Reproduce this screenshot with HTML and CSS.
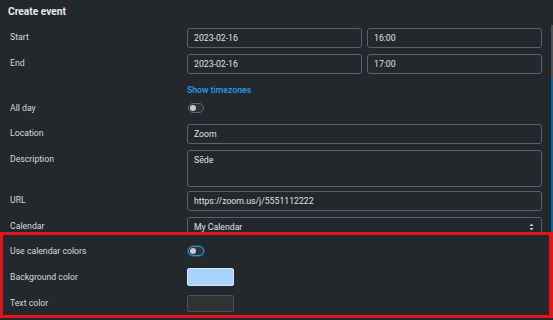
FILE: index.html
```html
<!DOCTYPE html>
<html lang="en">
<head>
  <meta charset="UTF-8" />
  <meta name="viewport" content="width=device-width, initial-scale=1.0"/>
  <title>Create event</title>
  <link rel="stylesheet" href="styles.css">
</head>
<body>
  <div class="top">
    <form class="event-form">
      <h1 class="title">Create event</h1>

      <div class="row">
        <label class="label">Start</label>
        <div class="pair">
          <input class="field" type="text" value="2023-02-16">
          <input class="field" type="text" value="16:00">
        </div>
      </div>

      <div class="row">
        <label class="label">End</label>
        <div class="pair">
          <input class="field" type="text" value="2023-02-16">
          <input class="field" type="text" value="17:00">
        </div>
      </div>

      <div class="row row-link">
        <span class="label"></span>
        <a class="link" href="#">Show timezones</a>
      </div>

      <div class="row row-switch">
        <label class="label">All day</label>
        <span class="switch"></span>
      </div>

      <div class="row">
        <label class="label">Location</label>
        <input class="field" type="text" value="Zoom">
      </div>

      <div class="row row-tall">
        <label class="label">Description</label>
        <textarea class="field area">Sēde</textarea>
      </div>

      <div class="row">
        <label class="label">URL</label>
        <input class="field" type="text" value="https://zoom.us/j/5551112222">
      </div>

      <div class="row">
        <label class="label">Calendar</label>
        <div class="field select">
          <span>My Calendar</span>
          <svg class="caret" width="5" height="8" viewBox="0 0 5 8">
            <path d="M2.5 0.5 L4.5 3 H0.5 Z M2.5 7.5 L4.5 5 H0.5 Z" fill="#c8cacb"/>
          </svg>
        </div>
      </div>
    </form>
    <div class="scroll"></div>
  </div>

  <section class="highlight">
    <div class="row row-switch">
      <label class="label">Use calendar colors</label>
      <span class="switch focus"></span>
    </div>
    <div class="row row-swatch">
      <label class="label">Background color</label>
      <span class="swatch bg"></span>
    </div>
    <div class="row row-swatch">
      <label class="label">Text color</label>
      <span class="swatch text"></span>
    </div>
  </section>
</body>
</html>
```

FILE: styles.css
```css
body {
  background: #22282c;
  color: #d8dadb;
  font-family: Roboto, "Liberation Sans", sans-serif;
  font-size: 8.7px;
  margin: 0;
  width: 553px;
  height: 320px;
  overflow: hidden;
}

.top {
  display: flex;
  height: 236px;
}

.event-form {
  flex: 1;
  padding: 5px 9px 0 10px;
}

.scroll {
  width: 2px;
  background: linear-gradient(
    to bottom,
    transparent 0px,
    transparent 25px,
    #4a545a 25px,
    #4a545a 78px,
    #17628f 78px
  );
}

.title {
  font-size: 10.2px;
  font-weight: 700;
  color: #e6e8e9;
  margin: 0 0 9px -2px;
  line-height: 14px;
}

.row {
  display: flex;
  align-items: flex-start;
  margin-bottom: 6px;
}

.label {
  width: 177px;
  flex-shrink: 0;
  line-height: 18px;
  color: #d6d8d9;
}

.pair {
  flex: 1;
  display: flex;
  gap: 5px;
}

.field {
  flex: 1;
  min-width: 0;
  box-sizing: border-box;
  height: 20px;
  background: transparent;
  border: 1px solid #59636a;
  border-radius: 3px;
  color: #e0e2e3;
  font-family: inherit;
  font-size: 8.7px;
  padding: 0 6px;
  margin: 0;
  outline: none;
}

.area {
  height: 37px;
  resize: none;
  padding-top: 3px;
  line-height: 12px;
}

.row-tall {
  margin-bottom: 4px;
}

.select {
  display: flex;
  align-items: center;
  justify-content: space-between;
  height: 20px;
}

.caret {
  margin-right: 1px;
}

.row-link {
  height: 18px;
  margin: 7px 0 0;
}

.link {
  color: #2b9ee8;
  text-decoration: none;
  font-weight: 500;
  line-height: 18px;
}

.row-switch {
  height: 18px;
  align-items: center;
  margin-bottom: 7px;
}

.switch {
  position: relative;
  width: 16px;
  height: 10px;
  box-sizing: border-box;
  border: 1px solid #5f686e;
  border-radius: 5px;
  background: #2c3338;
  margin-left: 1px;
}

.switch::after {
  content: "";
  position: absolute;
  left: 1px;
  top: 1px;
  width: 6px;
  height: 6px;
  border-radius: 50%;
  background: #c9cccf;
}

.switch.focus {
  border-color: #3d8fc8;
  box-shadow: 0 0 0 1px #1d4f70;
}

.highlight {
  position: relative;
  z-index: 1;
  margin-top: -4px;
  height: 86px;
  box-sizing: border-box;
  border: 3px solid #e3141c;
  border-right-width: 4px;
  background: #22282c;
  padding: 7px 0 0 7px;
}

.highlight .row-switch {
  margin-bottom: 8px;
}

.row-swatch {
  height: 18px;
  align-items: center;
  margin-bottom: 8px;
}

.swatch {
  width: 47px;
  height: 17px;
  box-sizing: border-box;
  border-radius: 2px;
}

.swatch.bg {
  height: 18px;
  background: #a8d4fb;
  border: 1px solid #cfe6fb;
}

.swatch.text {
  background: #323232;
  border: 1px solid #4a5257;
}
```
